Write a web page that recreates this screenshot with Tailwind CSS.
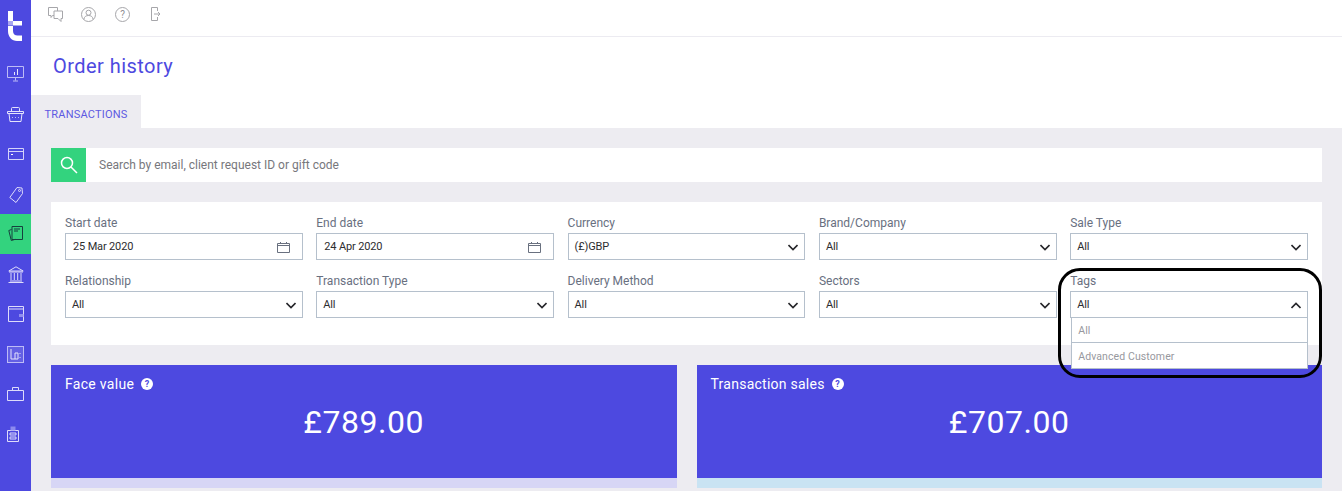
<!DOCTYPE html>
<html lang="en"><head><meta charset="utf-8"><title>Order history</title>
<script src="https://cdn.jsdelivr.net/npm/@tailwindcss/browser@4"></script></head>
<body class="m-0 overflow-hidden bg-white">
<div class="flex h-[491px] w-[1342px] overflow-hidden font-['Roboto',sans-serif]">
<aside class="flex w-[31px] shrink-0 flex-col bg-[#4d49e0]">
  <div class="h-[54px] pl-[8px] pt-[11px]">
    <svg class="h-[30px] w-[14px]" viewBox="0 0 14 30" fill="#fff"><path d="M0 0h5v10H0z"/><path d="M0 10h5v4.500H0z" fill="#a9a6f1"/><path d="M5 10h9v4.500H5z"/><path d="M0 15h5v5c0 3 2 4.500 4.500 4.500H14V30H9C4 30 0 26 0 20z"/></svg>
  </div>
  <div class="flex h-10 items-center justify-center"><svg class="h-[16px] w-[17px]" viewBox="0 0 17 16" fill="none" stroke="#bdbbf6"><path d="M.5.500h16v11H.5zM8.500 11.500v3M6 15h5"/><path d="M7.500 9V6M10.500 9V3" stroke="#e8e7fc"/></svg></div>
  <div class="flex h-10 items-center justify-center"><svg class="h-[15px] w-[17px]" viewBox="0 0 17 15" fill="none" stroke="#e4e3fb"><path d="M.5 4.500h16v2h-16zM2 6.500l1 8h11l1-8M4.500 4.500V1.500a1 1 0 011-1h6a1 1 0 011 1v3"/><path d="M5 10.500h1M8 10.500h1M11 10.500h1" stroke="#bdbbf6"/></svg></div>
  <div class="flex h-10 items-center justify-center"><svg class="h-[12px] w-[16px]" viewBox="0 0 16 12" fill="none" stroke="#d5d4f9"><path d="M.5.500h15v11H.5zM.5 3.500h15"/><path d="M3 6.500h2" stroke="#fff"/></svg></div>
  <div class="flex h-10 items-center justify-center"><svg class="h-[17px] w-[14px]" viewBox="0 0 14 17" fill="none" stroke="#dedcfa"><path d="M8 1.500l5 .5.500 5.500-6.500 9L.8 11.500z"/><circle cx="10.500" cy="4.500" r="1"/></svg></div>
  <div class="flex h-10 items-center justify-center bg-[#33d37e]"><svg class="h-[16px] w-[15px]" viewBox="0 0 15 16" fill="none" stroke="#17403f"><path d="M3.500 3.500L.8 4.500l2.500 10 4-1.200"/><path d="M4 .5h10.500v13H4z"/><path d="M6 3h6M6 5h4" stroke-width="1.200"/></svg></div>
  <div class="flex h-10 items-center justify-center"><svg class="h-[17px] w-[16px]" viewBox="0 0 16 17" fill="none" stroke="#dedcfa"><path d="M8 .8L.8 5h14.400zM1 6h14M2 15h12M.5 16.500h15M3 7v7M6.300 7v7M9.700 7v7M13 7v7"/></svg></div>
  <div class="flex h-10 items-center justify-center"><svg class="h-[16px] w-[16px]" viewBox="0 0 16 16" fill="none" stroke="#dedcfa"><path d="M.5.500h15v15H.5zM.5 3h15"/><path d="M11 8h4.500v3H11z" fill="#908df0" stroke="none"/></svg></div>
  <div class="flex h-10 items-center justify-center"><div class="flex h-[17px] w-[17px] items-center justify-center border border-[#bdbbf6] bg-[#6460e4]"><svg class="h-[13px] w-[13px]" viewBox="0 0 13 13" fill="none" stroke="#e4e3fb"><path d="M2 1v10h4M6 5h3v6H6zM11 5v1M11 9v1"/></svg></div></div>
  <div class="flex h-10 items-center justify-center"><svg class="h-[14px] w-[17px]" viewBox="0 0 17 14" fill="none" stroke="#dedcfa"><path d="M.5 3.500h16v10H.5zM5.500 3.500v-3h6v3"/></svg></div>
  <div class="flex h-10 items-center pl-[7px]"><svg class="h-[16px] w-[12px]" viewBox="0 0 12 16" fill="none" stroke="#dedcfa"><path d="M.5 4.500h11v11H.5zM3 7h6v2H3zM3 11h6v2H3z"/><path d="M3.500.500h5v4h-5z" fill="#8d8aee" stroke="none"/></svg></div>
</aside>
<main class="flex min-w-0 flex-1 flex-col">
  <header class="flex h-[37px] shrink-0 items-start gap-[18px] border-b border-[#ecebf1] bg-white pl-[17px] pt-[7px]">
    <svg class="h-[15px] w-[15px]" viewBox="0 0 15 15" fill="none" stroke="#a6a6aa"><path d="M.5.500h9v8h-5l-1.500 2v-2h-2.500z"/><path d="M6 4h8.500v7.500H13v3l-3-3H6z" fill="#fff"/></svg>
    <svg class="h-[15px] w-[15px]" viewBox="0 0 15 15" fill="none" stroke="#a6a6aa"><circle cx="7.500" cy="7.500" r="7"/><circle cx="7.500" cy="5.700" r="2.500"/><path d="M2.800 12.500c.5-3 2.300-4 4.700-4s4.200 1 4.700 4"/></svg>
    <div class="ml-[1px] flex h-[15px] w-[15px] items-center justify-center rounded-full border border-[#a6a6aa] text-[10px] leading-none text-[#8f8f94]">?</div>
    <svg class="ml-[3px] h-[14px] w-[9px] overflow-visible" viewBox="0 0 9 14" fill="none" stroke="#a6a6aa"><path d="M6.500 4V.5H.5v13h6V10M3 7h6M7 5l2 2-2 2"/></svg>
  </header>
  <div class="h-[58px] shrink-0 pl-[22px] pt-[17px] text-[20px] leading-[24px] tracking-[0.45px] text-[#4d49e0]"><h1>Order history</h1></div>
  <div class="flex h-[33px] shrink-0 bg-white"><div class="flex w-[110px] items-center justify-center bg-[#edecf1] pt-[8px] text-[11px] tracking-[0.2px] text-[#5d59e2]">TRANSACTIONS</div></div>
  <div class="flex-1 bg-[#edecf1] px-[20px] pt-[20px]">
    <div class="flex h-[34px] bg-white">
      <div class="flex w-[35px] items-center justify-center bg-[#33d37e]"><svg class="h-[18px] w-[18px]" viewBox="0 0 18 18" fill="none" stroke="#fff" stroke-width="1.500"><circle cx="7" cy="7" r="5.500"/><path d="M11 11l6 6"/></svg></div>
      <div class="flex items-center pl-[13px] text-[12px] text-[#77777c]">Search by email, client request ID or gift code</div>
    </div>
    <div class="mt-[20px] grid h-[143px] grid-cols-5 content-start gap-x-[13.500px] gap-y-[14px] bg-white px-[14px] pt-[14px] text-[12px]">
      <div><div class="h-[17px] leading-[15px] text-[#69707f]">Start date</div><div class="flex h-[27px] items-center justify-between border border-[#b5c0cc] pl-[7px] pr-[12px] pt-[1px] text-[11px] tracking-[-0.15px] text-[#2d2d30]">25 Mar 2020<svg class="h-[11px] w-[13px]" viewBox="0 0 13 11" fill="none" stroke="#69707f"><path d="M.5 1.500h12v9H.5zM.5 3.500h12M3.500 0v2M9.500 0v2"/></svg></div></div>
      <div><div class="h-[17px] leading-[15px] text-[#69707f]">End date</div><div class="flex h-[27px] items-center justify-between border border-[#b5c0cc] pl-[7px] pr-[12px] pt-[1px] text-[11px] tracking-[-0.15px] text-[#2d2d30]">24 Apr 2020<svg class="h-[11px] w-[13px]" viewBox="0 0 13 11" fill="none" stroke="#69707f"><path d="M.5 1.500h12v9H.5zM.5 3.500h12M3.500 0v2M9.500 0v2"/></svg></div></div>
      <div><div class="h-[17px] leading-[15px] text-[#69707f]">Currency</div><div class="flex h-[27px] items-center justify-between border border-[#b5c0cc] pl-[6px] pr-[6px] pt-[1px] text-[11px] tracking-[-0.15px] text-[#2d2d30]">(£)GBP<svg class="h-[7px] w-[10px]" viewBox="0 0 10 7" fill="none" stroke="#26262a" stroke-width="1.600"><path d="M.5 1l4.500 4.500L9.500 1"/></svg></div></div>
      <div><div class="h-[17px] leading-[15px] text-[#69707f]">Brand/Company</div><div class="flex h-[27px] items-center justify-between border border-[#b5c0cc] pl-[6px] pr-[6px] pt-[1px] text-[11px] tracking-[-0.15px] text-[#2d2d30]">All<svg class="h-[7px] w-[10px]" viewBox="0 0 10 7" fill="none" stroke="#26262a" stroke-width="1.600"><path d="M.5 1l4.500 4.500L9.500 1"/></svg></div></div>
      <div><div class="h-[17px] leading-[15px] text-[#69707f]">Sale Type</div><div class="flex h-[27px] items-center justify-between border border-[#b5c0cc] pl-[6px] pr-[6px] pt-[1px] text-[11px] tracking-[-0.15px] text-[#2d2d30]">All<svg class="h-[7px] w-[10px]" viewBox="0 0 10 7" fill="none" stroke="#26262a" stroke-width="1.600"><path d="M.5 1l4.500 4.500L9.500 1"/></svg></div></div>
      <div><div class="h-[17px] leading-[15px] text-[#69707f]">Relationship</div><div class="flex h-[27px] items-center justify-between border border-[#b5c0cc] pl-[6px] pr-[6px] pt-[1px] text-[11px] tracking-[-0.15px] text-[#2d2d30]">All<svg class="h-[7px] w-[10px]" viewBox="0 0 10 7" fill="none" stroke="#26262a" stroke-width="1.600"><path d="M.5 1l4.500 4.500L9.500 1"/></svg></div></div>
      <div><div class="h-[17px] leading-[15px] text-[#69707f]">Transaction Type</div><div class="flex h-[27px] items-center justify-between border border-[#b5c0cc] pl-[6px] pr-[6px] pt-[1px] text-[11px] tracking-[-0.15px] text-[#2d2d30]">All<svg class="h-[7px] w-[10px]" viewBox="0 0 10 7" fill="none" stroke="#26262a" stroke-width="1.600"><path d="M.5 1l4.500 4.500L9.500 1"/></svg></div></div>
      <div><div class="h-[17px] leading-[15px] text-[#69707f]">Delivery Method</div><div class="flex h-[27px] items-center justify-between border border-[#b5c0cc] pl-[6px] pr-[6px] pt-[1px] text-[11px] tracking-[-0.15px] text-[#2d2d30]">All<svg class="h-[7px] w-[10px]" viewBox="0 0 10 7" fill="none" stroke="#26262a" stroke-width="1.600"><path d="M.5 1l4.500 4.500L9.500 1"/></svg></div></div>
      <div><div class="h-[17px] leading-[15px] text-[#69707f]">Sectors</div><div class="flex h-[27px] items-center justify-between border border-[#b5c0cc] pl-[6px] pr-[6px] pt-[1px] text-[11px] tracking-[-0.15px] text-[#2d2d30]">All<svg class="h-[7px] w-[10px]" viewBox="0 0 10 7" fill="none" stroke="#26262a" stroke-width="1.600"><path d="M.5 1l4.500 4.500L9.500 1"/></svg></div></div>
      <div class="relative z-10"><div class="h-[17px] leading-[15px] text-[#69707f]">Tags</div><div class="flex h-[27px] items-center justify-between border border-[#b5c0cc] pl-[6px] pr-[6px] pt-[1px] text-[11px] tracking-[-0.15px] text-[#2d2d30]">All<svg class="h-[7px] w-[10px]" viewBox="0 0 10 7" fill="none" stroke="#26262a" stroke-width="1.600"><path d="M.5 6l4.500-4.500L9.500 6"/></svg></div>
        <div class="absolute left-[1px] right-0 top-[44px] border-x border-b border-[#b5c0cc] bg-white text-[10.500px] tracking-[0.1px] text-[#97989e]">
          <div class="flex h-[25px] items-center border-b border-[#b5c0cc] pl-[6px] pt-[2px]">All</div>
          <div class="flex h-[25px] items-center pl-[6px] pt-[2px]">Advanced Customer</div>
        </div>
        <div class="pointer-events-none absolute -left-[12px] -top-[6px] h-[110px] w-[264px] rounded-[22px] border-[3px] border-black"></div>
      </div>
    </div>
    <div class="mt-[20px] grid grid-cols-2 gap-[20px]">
      <div class="h-[123px] border-b-[10px] border-[#d7d6f5] bg-[#4d49e0] text-white">
        <div class="flex items-center gap-[7px] pl-[14px] pt-[10px] text-[14px] leading-[18px] tracking-[0.3px]"><span>Face value</span><span class="flex h-[12px] w-[12px] items-center justify-center rounded-full bg-white text-[9px] font-bold leading-none text-[#4d49e0]">?</span></div>
        <div class="mt-[9px] text-center text-[32px] leading-[40px] tracking-[0.55px]">£789.00</div>
      </div>
      <div class="h-[123px] border-b-[10px] border-[#c9e3f3] bg-[#4d49e0] text-white">
        <div class="flex items-center gap-[7px] pl-[14px] pt-[10px] text-[14px] leading-[18px] tracking-[0.25px]"><span>Transaction sales</span><span class="flex h-[12px] w-[12px] items-center justify-center rounded-full bg-white text-[9px] font-bold leading-none text-[#4d49e0]">?</span></div>
        <div class="mt-[9px] text-center text-[32px] leading-[40px] tracking-[0.55px]">£707.00</div>
      </div>
    </div>
  </div>
</main>
</div>
</body></html>
